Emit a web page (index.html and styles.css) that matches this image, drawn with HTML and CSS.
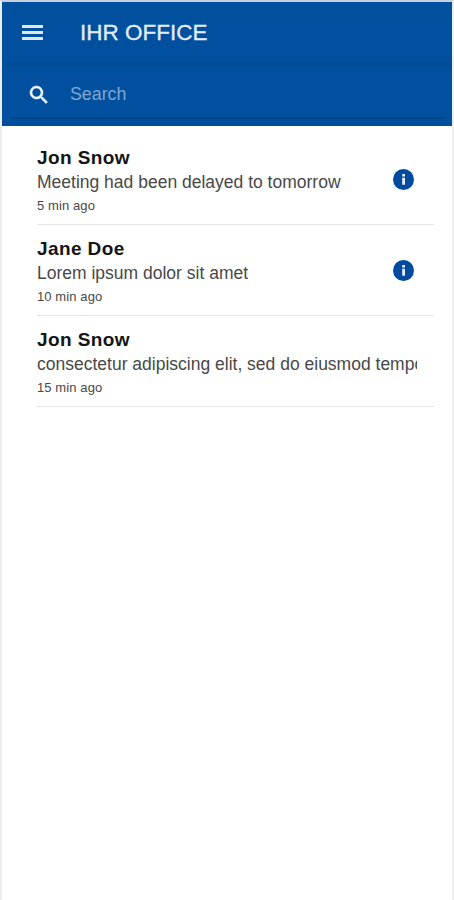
FILE: index.html
```html
<!DOCTYPE html>
<html lang="en">

<head>
    <meta charset="UTF-8">
    <meta name="viewport" content="width=device-width, initial-scale=1.0">
    <title>IHR Office</title>
    <link rel="stylesheet" href="styles.css">
</head>

<body>
    <!-- HEADER -->
    <header class="Header">
        <div class="Header-bar">
            <svg class="Header-menu" viewBox="0 0 21 15">
                <path d="M0 0h21v3H0zM0 6h21v3H0zM0 12h21v3H0z" />
            </svg>
            <h1 class="Header-title">IHR OFFICE</h1>
        </div>
        <div class="Search">
            <svg class="Search-icon" viewBox="0 0 24 24">
                <path d="M15.5 14h-.79l-.28-.27A6.471 6.471 0 0 0 16 9.5 6.5 6.5 0 1 0 9.5 16c1.61 0 3.09-.59 4.23-1.57l.27.28v.79l5 4.99L20.49 19l-4.99-5zm-6 0C7.01 14 5 11.99 5 9.5S7.01 5 9.5 5 14 7.01 14 9.5 11.99 14 9.5 14z" />
            </svg>
            <input class="Search-input" type="text" placeholder="Search">
        </div>
    </header>

    <!-- MESSAGES -->
    <main class="Messages">
        <article class="Message">
            <div class="Message-content">
                <h2 class="Message-name">Jon Snow</h2>
                <p class="Message-text">Meeting had been delayed to tomorrow</p>
                <p class="Message-time">5 min ago</p>
            </div>
            <svg class="Message-info" viewBox="0 0 21 21">
                <circle class="Message-infoCircle" cx="10.5" cy="10.5" r="10.5" />
                <path class="Message-infoMark" d="M9.2 5h2.8v2.4H9.2zM9.2 8.8h2.8v7H9.2z" />
            </svg>
        </article>
        <article class="Message">
            <div class="Message-content">
                <h2 class="Message-name">Jane Doe</h2>
                <p class="Message-text">Lorem ipsum dolor sit amet</p>
                <p class="Message-time">10 min ago</p>
            </div>
            <svg class="Message-info" viewBox="0 0 21 21">
                <circle class="Message-infoCircle" cx="10.5" cy="10.5" r="10.5" />
                <path class="Message-infoMark" d="M9.2 5h2.8v2.4H9.2zM9.2 8.8h2.8v7H9.2z" />
            </svg>
        </article>
        <article class="Message">
            <div class="Message-content">
                <h2 class="Message-name">Jon Snow</h2>
                <p class="Message-text">consectetur adipiscing elit, sed do eiusmod tempor</p>
                <p class="Message-time">15 min ago</p>
            </div>
        </article>
    </main>
</body>

</html>
```
FILE: styles.css
```css
:root {
    --color-primary: #00509f;
    --color-primary-dark: #00438a;
    --color-icon: #004a9f;
    --color-text: #141414;
    --color-muted: #484848;
    --color-line: #e4e4e4;
}

/* RESET */
* {
    margin: 0;
    padding: 0;
    box-sizing: border-box;
    font-family: "Liberation Sans", Arial, sans-serif;
}

body {
    min-height: 100vh;
    background-color: #fff;
    color: var(--color-text);
    border: 2px solid #eee;
    border-top-color: #c8cfdd;
    border-bottom: 0;
}

/* HEADER */
.Header {
    background-color: var(--color-primary);
    color: #fff;
}

.Header-bar {
    display: flex;
    align-items: center;
    height: 63px;
    padding: 0 20px;
    border-bottom: 2px solid #004a94;
}

.Header-menu {
    width: 21px;
    height: 15px;
    margin-bottom: 1px;
    fill: #dfe6f7;
}

.Header-title {
    margin-left: 37px;
    font-size: 22.5px;
    font-weight: normal;
    color: #e4edf7;
    -webkit-text-stroke: 0.3px #e4edf7;
}

.Search {
    display: flex;
    align-items: center;
    height: 54px;
    margin: 0 9px;
    padding: 7px 0 0 16px;
    border-bottom: 2px solid var(--color-primary-dark);
}

.Header::after {
    content: "";
    display: block;
    height: 7px;
}

.Search-icon {
    width: 24px;
    height: 24px;
    fill: #f2f6fc;
    stroke: #f2f6fc;
    stroke-width: 0.6;
}

.Search-input {
    flex: 1;
    min-width: 0;
    margin-left: 19px;
    border: 0;
    outline: 0;
    background: none;
    color: #fff;
    font-size: 17.8px;
}

.Search-input::placeholder {
    color: #7fa7cf;
}

/* MESSAGES */
.Messages {
    padding: 8px 18px 0 35px;
}

.Message {
    display: flex;
    justify-content: space-between;
    height: 91px;
    padding: 12px 18px 0 0;
    border-bottom: 1px solid var(--color-line);
}

.Message-content {
    min-width: 0;
    margin-right: -1px;
    overflow: hidden;
}

.Message-name {
    font-size: 19px;
    line-height: 24px;
    letter-spacing: 0.4px;
}

.Message-text {
    font-size: 17.5px;
    line-height: 25px;
    white-space: nowrap;
    color: var(--color-muted);
}

.Message-time {
    font-size: 13px;
    line-height: 22px;
    letter-spacing: 0.1px;
    color: var(--color-muted);
}

.Message-info {
    flex-shrink: 0;
    width: 21px;
    height: 21px;
    margin: 23px 2px 0 0;
}

.Message-infoCircle {
    fill: var(--color-icon);
}

.Message-infoMark {
    fill: #e6edf7;
}
```
